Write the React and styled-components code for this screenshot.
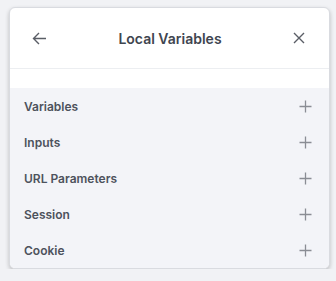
import { styled, createGlobalStyle } from "styled-components";

const Global = createGlobalStyle`
  body {
    margin: 0;
    background: #f1f2f5;
    font-family: Inter, "Noto Sans", sans-serif;
  }
`;

const Page = styled.div`
  padding: 7px 8px 0 9px;
`;

const Card = styled.div`
  width: 319px;
  background: #ffffff;
  border: 1px solid #d9dbe0;
  border-radius: 6px;
  box-shadow: 0 2px 4px rgba(0, 0, 0, 0.22);
  overflow: hidden;
`;

const Header = styled.div`
  display: flex;
  align-items: center;
  justify-content: space-between;
  height: 60px;
  padding: 0 24px 0 22px;
  border-bottom: 1px solid #eceef1;
`;

const Title = styled.h2`
  margin: 0;
  font-size: 14px;
  font-weight: 600;
  color: #40454f;
`;

const IconButton = styled.button`
  display: flex;
  align-items: center;
  justify-content: center;
  padding: 0;
  border: none;
  background: transparent;
  color: #5a5e66;
`;

const Spacer = styled.div`
  height: 19px;
`;

const List = styled.div`
  background: #f3f4f8;
`;

const Row = styled.div`
  display: flex;
  align-items: center;
  justify-content: space-between;
  height: 36px;
  padding: 0 17px 0 14px;
`;

const Label = styled.span`
  font-size: 12px;
  font-weight: 600;
  color: #4d525c;
`;

const Plus = () => (
  <svg width="13" height="13" viewBox="0 0 13 13">
    <path d="M6.5 0.5v12M0.5 6.5h12" stroke="#8a8d94" strokeWidth="1.3" fill="none" />
  </svg>
);

const rows = ["Variables", "Inputs", "URL Parameters", "Session", "Cookie"];

export default function App() {
  return (
    <Page>
      <Global />
      <Card>
        <Header>
          <IconButton>
            <svg width="15" height="13" viewBox="0 0 15 13">
              <path d="M14 6.5H1.5M7 1L1.5 6.5L7 12" stroke="#5a5e66" strokeWidth="1.4" fill="none" />
            </svg>
          </IconButton>
          <Title>Local Variables</Title>
          <IconButton>
            <svg width="12" height="12" viewBox="0 0 12 12">
              <path d="M1 1L11 11M11 1L1 11" stroke="#5a5e66" strokeWidth="1.4" fill="none" />
            </svg>
          </IconButton>
        </Header>
        <Spacer />
        <List>
          {rows.map((r) => (
            <Row key={r}>
              <Label>{r}</Label>
              <Plus />
            </Row>
          ))}
        </List>
      </Card>
    </Page>
  );
}
